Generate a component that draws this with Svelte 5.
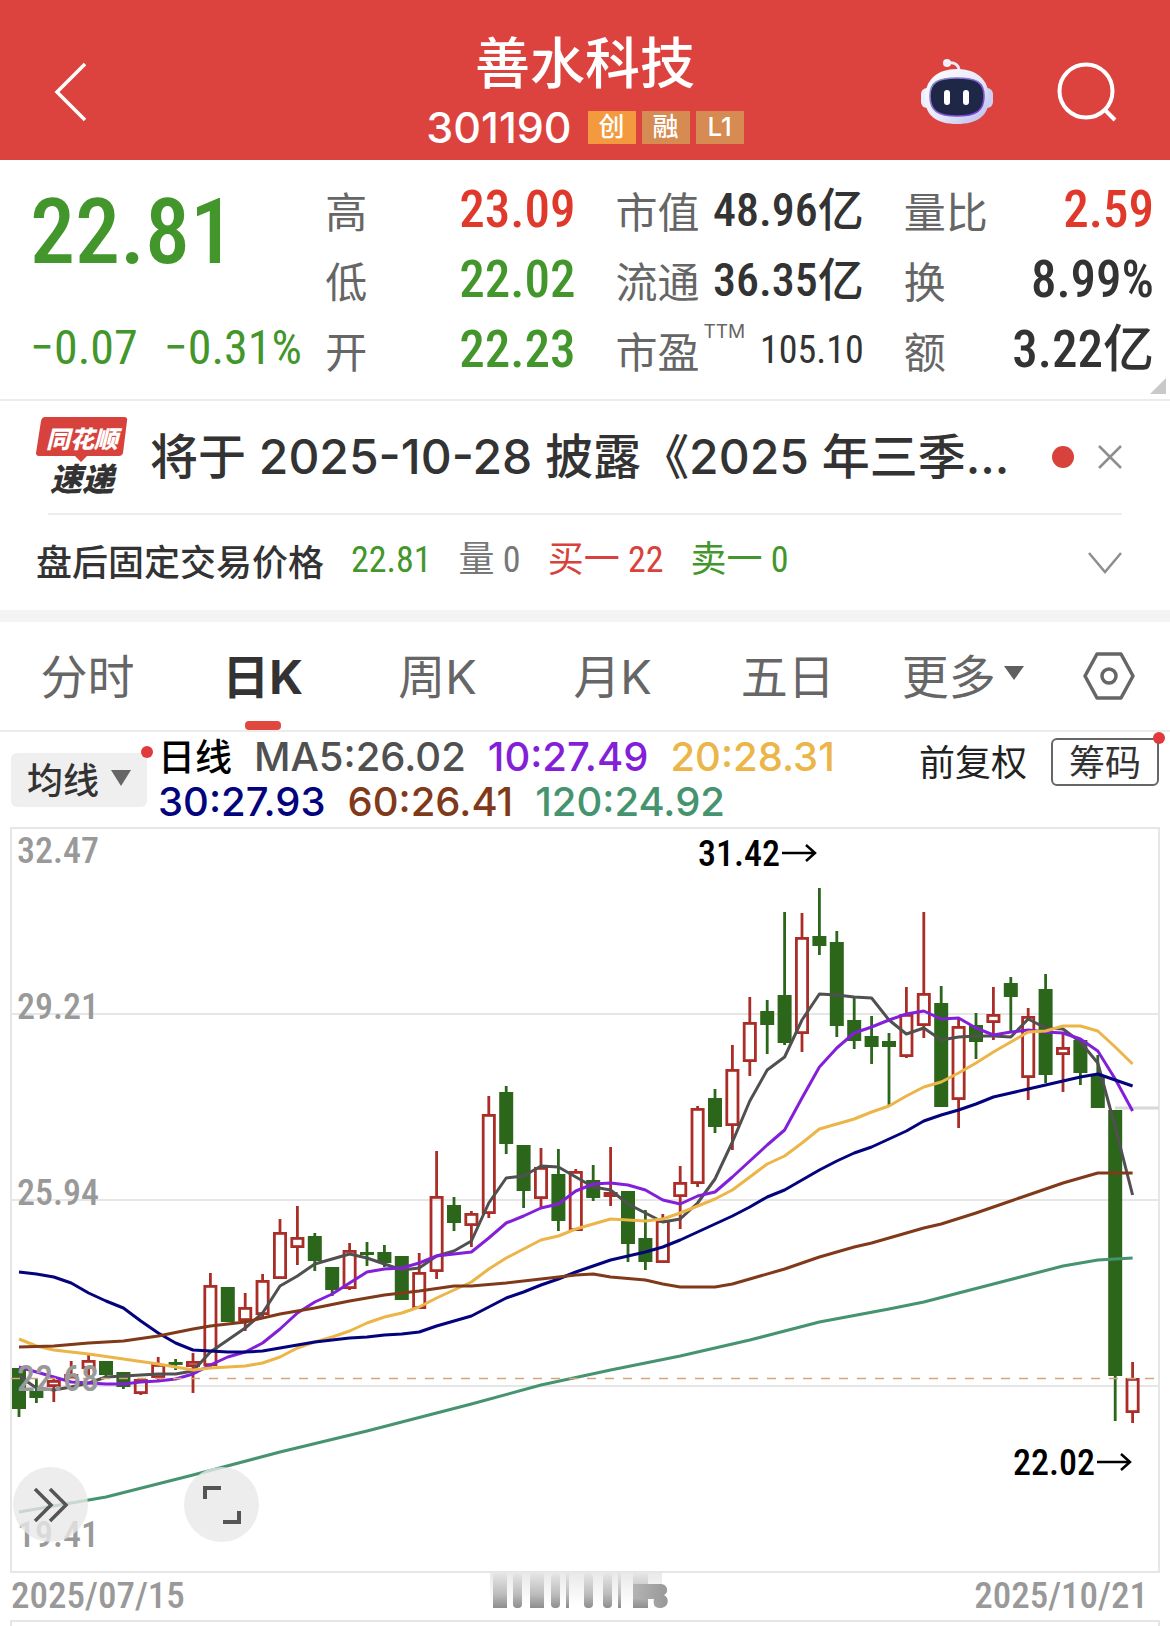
<script>
  // Candle rows: [high, body top, body bottom, low, rising]
  const candles = [
    [1368,1368,1409,1417,0],[1378,1391,1398,1403,0],[1376,1380,1387,1402,1],[1361,1374,1379,1379,1],
    [1354,1360,1369,1378,1],[1361,1361,1375,1378,0],[1372,1372,1387,1389,0],[1379,1379,1394,1395,1],
    [1357,1364,1378,1382,1],[1359,1362,1365,1370,0],[1353,1361,1367,1393,1],[1273,1285,1366,1367,1],
    [1287,1287,1322,1322,0],[1293,1307,1321,1331,1],[1274,1280,1315,1317,1],[1219,1232,1279,1279,1],
    [1206,1237,1248,1265,1],[1233,1236,1261,1271,0],[1267,1267,1290,1296,0],[1243,1250,1289,1290,1],
    [1242,1252,1255,1266,0],[1245,1252,1263,1267,0],[1256,1256,1300,1300,0],[1253,1272,1309,1309,1],
    [1151,1196,1272,1279,1],[1197,1205,1223,1231,0],[1211,1213,1226,1247,1],[1096,1114,1214,1218,1],
    [1086,1092,1144,1154,0],[1145,1145,1191,1208,0],[1148,1167,1199,1208,1],[1149,1174,1221,1231,0],
    [1169,1171,1231,1231,1],[1165,1180,1198,1201,0],[1147,1192,1197,1206,1],[1191,1191,1244,1262,0],
    [1210,1238,1262,1270,0],[1214,1220,1263,1263,1],[1166,1182,1197,1229,1],[1106,1108,1184,1187,1],
    [1089,1098,1127,1133,0],[1045,1069,1126,1150,1],[997,1022,1062,1076,1],[1000,1011,1025,1054,0],
    [912,995,1043,1045,0],[913,937,1034,1052,1],[888,936,946,955,0],[931,942,1026,1037,0],
    [997,1020,1041,1049,0],[1016,1036,1047,1064,0],[1033,1041,1047,1105,0],[987,1014,1057,1058,1],
    [912,993,1026,1038,1],[986,1003,1107,1107,0],[1018,1026,1100,1128,1],[1013,1025,1042,1059,0],
    [987,1014,1023,1040,1],[977,983,997,1033,0],[1008,1016,1078,1100,1],[974,989,1075,1083,0],
    [1033,1047,1055,1092,1],[1038,1040,1073,1085,0],[1055,1075,1108,1108,0],[1110,1110,1376,1421,0],
    [1362,1378,1413,1423,1]
  ];
  const cx = (i) => 19 + 17.4 * i;

  const dense = (ys) => ys.map((y, i) => `${cx(i).toFixed(1)},${y}`).join(' ');
  const sparse = (ps) => ps.map(([i, y]) => `${cx(i).toFixed(1)},${y}`).join(' ');

  const averages = [
    { color: '#45936f', points: sparse([[0,1512],[5,1497],[10,1475],[15,1452],[20,1431],[24,1413],[26,1404],[30,1385],[34,1370],[38,1356],[42,1340],[46,1322],[50,1309],[52,1302],[54,1293],[56,1284],[58,1275],[60,1266],[62,1260],[64,1258]]) },
    { color: '#505050', points: dense([1376,1388,1390,1387,1383,1377,1376,1375,1374,1374,1371,1352,1340,1328,1313,1286,1276,1264,1259,1254,1258,1264,1270,1268,1256,1251,1241,1203,1178,1176,1166,1167,1177,1187,1190,1204,1213,1222,1219,1203,1179,1142,1101,1070,1057,1020,994,995,997,998,1020,1034,1028,1040,1037,1036,1036,1037,1019,1028,1029,1042,1063,1127,1195]) },
    { color: '#841fd9', points: dense([1367,1372,1377,1382,1383,1384,1384,1382,1381,1379,1374,1365,1357,1352,1343,1329,1313,1302,1294,1283,1272,1269,1268,1263,1256,1254,1252,1238,1223,1216,1208,1204,1191,1184,1183,1185,1190,1200,1204,1196,1192,1177,1161,1145,1130,1098,1067,1048,1033,1027,1020,1014,1011,1019,1018,1028,1035,1032,1030,1032,1033,1039,1051,1079,1111]) },
    { color: '#ebb548', points: sparse([[0,1339],[1,1346],[2,1350],[4,1354],[6,1359],[8,1364],[9,1367],[10,1370],[11,1368],[13,1366],[14,1363],[15,1357],[16,1348],[17,1342],[18,1337],[19,1331],[20,1323],[21,1317],[22,1313],[23,1307],[24,1298],[25,1290],[26,1282],[27,1269],[28,1258],[29,1249],[30,1240],[31,1236],[32,1229],[33,1224],[34,1219],[35,1220],[36,1221],[37,1219],[38,1213],[39,1206],[40,1199],[41,1190],[42,1177],[43,1164],[44,1156],[45,1143],[46,1129],[47,1124],[48,1119],[49,1112],[50,1106],[51,1096],[52,1087],[53,1082],[54,1073],[55,1063],[56,1052],[57,1042],[58,1032],[59,1031],[60,1026],[61,1026],[62,1031],[63,1047],[64,1064]]) },
    { color: '#03037e', points: dense([1272,1274,1277,1283,1293,1301,1308,1321,1333,1343,1350,1351,1352,1352,1351,1348,1345,1342,1340,1338,1337,1335,1334,1332,1326,1321,1316,1307,1298,1292,1285,1279,1272,1266,1260,1256,1252,1247,1240,1232,1224,1216,1207,1197,1190,1180,1170,1161,1153,1147,1139,1131,1121,1115,1110,1104,1097,1093,1089,1085,1081,1077,1074,1080,1086]) },
    { color: '#803a1a', points: sparse([[0,1347],[2,1346],[4,1343],[6,1341],[8,1336],[10,1329],[11,1326],[13,1322],[15,1314],[17,1308],[19,1301],[21,1295],[23,1291],[25,1286],[26,1286],[28,1283],[30,1279],[32,1275],[33,1274],[34,1277],[36,1280],[37,1284],[38,1287],[40,1287],[41,1284],[42,1279],[44,1269],[46,1257],[48,1247],[49,1243],[50,1238],[52,1228],[53,1224],[55,1213],[57,1201],[58,1195],[60,1183],[61,1178],[62,1173],[64,1173]]) }
  ];

  const axis = [['32.47', 863], ['29.21', 1019], ['25.94', 1205], ['22.68', 1391], ['19.41', 1547]];

  const columns = [
    [['高', '23.09', 'up'], ['低', '22.02', 'down'], ['开', '22.23', 'down']],
    [['市值', '48.96亿', 'mid'], ['流通', '36.35亿', 'mid'], ['市盈', '105.10', 'small', 'TTM']],
    [['量比', '2.59', 'up'], ['换', '8.99%', ''], ['额', '3.22亿', '']]
  ];

  const tabs = ['分时', '日K', '周K', '月K', '五日'];

  const legend = [
    ['MA5:26.02', 'ma5'], ['10:27.49', 'ma10'], ['20:28.31', 'ma20'],
    ['30:27.93', 'ma30'], ['60:26.41', 'ma60'], ['120:24.92', 'ma120']
  ];

  // Smeared middle date: [x, width]
  const smear = [[5,14],[25,9],[42,14],[63,9],[78,3],[96,9],[115,9],[130,3],[145,15]];
</script>

<div class="page">
  <header>
    <button class="plain back" aria-label="返回">
      <svg width="36" height="60" viewBox="0 0 36 60"><path d="M33 2 L5 30 L33 58" fill="none" stroke="#fff" stroke-width="3.5" /></svg>
    </button>
    <div class="heading">
      <h1>善水科技</h1>
      <div class="code">
        <span class="num">301190</span>
        <span class="tag bright">创</span><span class="tag">融</span><span class="tag">L1</span>
      </div>
    </div>
    <div class="actions">
      <button class="plain" aria-label="助手">
        <svg width="74" height="68" viewBox="0 0 74 68">
          <defs>
            <linearGradient id="shell" x1="0" y1="0" x2="1" y2="1"><stop offset="0" stop-color="#fff" /><stop offset=".55" stop-color="#e6e8fa" /><stop offset="1" stop-color="#b6b9ea" /></linearGradient>
            <linearGradient id="rim" x1="0" y1="0" x2="1" y2="1"><stop offset="0" stop-color="#8d91c9" /><stop offset="1" stop-color="#7b35dd" /></linearGradient>
          </defs>
          <path d="M39 13 C39 7 35 4 28 5" fill="none" stroke="#eceaf6" stroke-width="3" />
          <circle cx="27" cy="5" r="4" fill="#f3eef8" />
          <rect x="1" y="30" width="12" height="20" rx="6" fill="#eceefd" />
          <rect x="61" y="30" width="12" height="20" rx="6" fill="#cdcff5" />
          <path d="M37 11 C57 11 69 22 69 40 C69 58 57 66 37 66 C17 66 5 58 5 40 C5 22 17 11 37 11 Z" fill="url(#shell)" />
          <path d="M37 20 C56 20 64 24 64 38 C64 53 56 58 37 58 C18 58 10 53 10 38 C10 24 18 20 37 20 Z" fill="#1e2746" stroke="url(#rim)" stroke-width="1.6" />
          <rect x="24" y="32" width="6" height="15" rx="3" fill="#fff" />
          <rect x="43" y="32" width="6" height="15" rx="3" fill="#fff" />
        </svg>
      </button>
      <button class="plain" aria-label="搜索">
        <svg width="62" height="62" viewBox="0 0 62 62"><g fill="none" stroke="#fff" stroke-width="4"><circle cx="30" cy="30" r="26.500" /><path d="M48 48 L59 59" /></g></svg>
      </button>
    </div>
  </header>

  <section class="quote">
    <div class="last">
      <div class="price">22.81</div>
      <div class="change"><span>−0.07</span><span>−0.31%</span></div>
    </div>
    {#each columns as col}
      <dl>
        {#each col as [label, value, tone, sup]}
          <div class="pair"><dt>{label}{#if sup}<sup>{sup}</sup>{/if}</dt><dd class={tone}>{value}</dd></div>
        {/each}
      </dl>
    {/each}
    <svg class="corner" width="16" height="16" viewBox="0 0 16 16"><path d="M16 0 V16 H0 Z" fill="#c9c9c9" /></svg>
  </section>

  <section class="news">
    <div class="logo">
      <svg class="bubble" width="92" height="46" viewBox="0 0 92 46"><path d="M9 0 H88 Q92 0 91 4 L87 36 Q86 39 83 39 H51 L45 45 L39 39 H3 Q0 39 0 36 L5 4 Q6 0 9 0 Z" fill="#d8423c" /></svg>
      <span class="brand">同花顺</span>
      <span class="express">速递</span>
    </div>
    <a href="#notice">将于 2025-10-28 披露《2025 年三季...</a>
    <i class="dot"></i>
    <button class="plain" aria-label="关闭">
      <svg width="24" height="24" viewBox="0 0 24 24"><path d="M1 1 L23 23 M23 1 L1 23" stroke="#8e8e8e" stroke-width="2.5" /></svg>
    </button>
  </section>

  <section class="after">
    <span class="label">盘后固定交易价格</span>
    <span class="down">22.81</span>
    <span class="muted">量 0</span>
    <span class="buy">买一 22</span>
    <span class="down">卖一 0</span>
    <button class="plain more" aria-label="展开">
      <svg width="34" height="24" viewBox="0 0 34 24"><path d="M1 2 L17 21 L33 2" fill="none" stroke="#8e8e8e" stroke-width="2.5" /></svg>
    </button>
  </section>

  <nav>
    {#each tabs as tab, i}
      <button class="plain tab" class:active={i === 1}>{tab}</button>
    {/each}
    <button class="plain tab">更多<svg width="20" height="14" viewBox="0 0 20 14"><path d="M0 0 H20 L10 14 Z" fill="#5f5f5f" /></svg></button>
    <button class="plain gear" aria-label="设置">
      <svg width="52" height="48" viewBox="0 0 52 48"><g fill="none" stroke="#666" stroke-width="3.5"><path d="M14 2 H38 L50 24 L38 46 H14 L2 24 Z" stroke-linejoin="round" /><circle cx="26" cy="24" r="7" /></g></svg>
    </button>
  </nav>

  <section class="indicators">
    <button class="plain average">均线<svg width="20" height="16" viewBox="0 0 20 16"><path d="M0 0 H20 L10 16 Z" fill="#666" /></svg><i class="badge"></i></button>
    <div class="legend">
      <strong>日线</strong>
      {#each legend as [text, cls]}<span class={cls}>{text}</span>{/each}
    </div>
    <button class="plain adjust">前复权</button>
    <button class="plain chips">筹码<i class="badge"></i></button>
  </section>

  <section class="chart">
    <svg class="plot" viewBox="10 827 1150 746">
      <g stroke="#e6e6e6" stroke-width="2" fill="none">
        <rect x="11" y="828" width="1148" height="744" />
        <path d="M11 1014 H1159 M11 1200 H1159 M11 1386 H1159" />
      </g>
      <path d="M1115 1108 H1159" stroke="#d8d8d8" stroke-width="3" />
      {#each candles as [high, top, bottom, low, rising], i}
        {#if rising}
          <g stroke="#aa2e27" fill="none">
            <path d="M{cx(i)} {high} V{top} M{cx(i)} {bottom} V{low}" stroke-width="2.8" />
            <rect x={cx(i) - 5.6} y={top + 1.4} width="11.200" height={Math.max(bottom - top - 2.8, 2)} stroke-width="2.8" />
          </g>
        {:else}
          <g fill="#2b661a">
            <rect x={cx(i) - 1.4} y={high} width="2.8" height={low - high} />
            <rect x={cx(i) - 7} y={top} width="14" height={bottom - top} />
          </g>
        {/if}
      {/each}
      {#each averages as line}
        <polyline points={line.points} fill="none" stroke={line.color} stroke-width="3" stroke-linejoin="round" />
      {/each}
      <path d="M11 1378.500 H1159" stroke="#d3a67c" stroke-width="1.5" stroke-dasharray="9 9" />
      {#each axis as [label, y]}<text class="axis" x="17" {y}>{label}</text>{/each}
      <text class="mark" x="780" y="866" text-anchor="end">31.42</text>
      <text class="mark" x="1095" y="1475" text-anchor="end">22.02</text>
      <g fill="none" stroke="#000" stroke-width="2.5">
        <path d="M782 853 H815 M806 845 L815 853 L806 861" />
        <path d="M1097 1462 H1130 M1121 1454 L1130 1462 L1121 1470" />
      </g>
    </svg>
    <div class="tools">
      <button class="plain round" aria-label="快进">
        <svg width="36" height="36" viewBox="0 0 36 36"><path d="M2 2 L18 18 L2 34 M17 2 L33 18 L17 34" fill="none" stroke="#555" stroke-width="3.5" /></svg>
      </button>
      <button class="plain round" aria-label="全屏">
        <svg width="40" height="40" viewBox="0 0 40 40"><path d="M3 14 V3 H19 M37 26 V37 H21" fill="none" stroke="#555" stroke-width="4" /></svg>
      </button>
    </div>
  </section>

  <div class="dates">
    <span>2025/07/15</span>
    <svg width="184" height="46" viewBox="0 0 184 46" aria-hidden="true">
      <defs>
        <linearGradient id="smear" x1="0" y1="0" x2="0" y2="1"><stop offset="0" stop-color="#e6e6e6" /><stop offset=".6" stop-color="#bdbdbd" /><stop offset="1" stop-color="#8d8d8d" /></linearGradient>
        <linearGradient id="haze" x1="0" y1="0" x2="0" y2="1"><stop offset="0" stop-color="#e9e9e9" /><stop offset="1" stop-color="#fff" /></linearGradient>
        <linearGradient id="tail" x1="0" y1="0" x2="1" y2="0"><stop offset="0" stop-color="#b4b4b4" /><stop offset="1" stop-color="#989898" /></linearGradient>
      </defs>
      <rect x="2" y="0" width="172" height="32" fill="url(#haze)" />
      {#each smear as [x, w]}<rect {x} y="0" width={w} height="35" rx={w === 9 ? 4 : 0} fill="url(#smear)" />{/each}
      <path d="M145 11 H173 C180 11 181 20 176 22 C182 25 181 35 172 35 C166 35 165 31 166 26 H145 Z" fill="url(#tail)" />
    </svg>
    <span>2025/10/21</span>
  </div>
  <div class="next"></div>
</div>

<style>
  :global(body) { background: #fff; }
  :global(#app) { --cjk: "Noto Sans CJK SC", sans-serif; --ui: Inter, "Noto Sans CJK SC", sans-serif; --din: "Roboto Condensed", "Liberation Sans Narrow", Roboto, "Noto Sans CJK SC", sans-serif; }
  .page { font-family: var(--ui); color: #333; }
  .plain { border: 0; background: none; padding: 0; margin: 0; font: inherit; color: inherit; display: flex; align-items: center; }
  svg { display: block; flex: none; }
  h1, dl, dd { margin: 0; }

  header { background: #dc433f; color: #fff; display: grid; grid-template-columns: 1fr auto 1fr; height: 160px; padding: 0 52px; }
  .back { padding-top: 24px; padding-bottom: 4px; }
  .heading { display: flex; flex-direction: column; align-items: center; padding-top: 27px; }
  h1 { font: 500 55px/64px var(--cjk); }
  .code { display: flex; align-items: center; gap: 6px; height: 72px; }
  .num { font-size: 43px; font-weight: 500; margin-right: 10px; }
  .tag { width: 48px; height: 33px; background: #d58b52; font: 500 26px/32px var(--ui); text-align: center; }
  .tag.bright { background: #f39a3e; }
  .actions { display: flex; justify-content: flex-end; align-items: center; gap: 62px; padding-top: 24px; padding-bottom: 4px; }

  .quote { position: relative; display: grid; grid-template-columns: minmax(0, 255fr) minmax(0, 250fr) minmax(0, 248fr) minmax(0, 250fr); column-gap: 40px; padding: 15px 16px 14px 30px; border-bottom: 2px solid #ececec; font-family: var(--din); }
  .last { color: #43962b; white-space: nowrap; font-weight: 500; }
  .price { font-size: 90px; line-height: 116px; height: 140px; }
  .change { display: flex; gap: 26px; font-size: 48px; line-height: 66px; font-weight: 400; }
  .pair { display: flex; justify-content: space-between; align-items: center; height: 70px; white-space: nowrap; }
  dt { font: 400 42px/60px var(--cjk); color: #666; display: flex; }
  sup { font: 400 19px/20px var(--ui); margin: 2px 0 0 4px; }
  dd { font-size: 51px; font-weight: 500; line-height: 66px; height: 66px; color: #333; }
  dd.mid { font-size: 46px; }
  dd.small { font-size: 38px; font-weight: 400; }
  .up { color: #e0382b; }
  .down { color: #43962b; }
  .corner { position: absolute; right: 4px; bottom: 5px; }

  .news { display: flex; align-items: center; height: 112px; margin: 0 48px; border-bottom: 2px solid #ececec; }
  .logo { position: relative; width: 92px; height: 80px; margin-left: -12px; display: flex; flex-direction: column; align-items: center; font-family: var(--cjk); font-style: italic; font-weight: 900; white-space: nowrap; }
  .bubble { position: absolute; top: 0; left: 0; }
  .brand { position: relative; color: #fff; font-size: 24px; line-height: 42px; }
  .express { font-size: 32px; line-height: 36px; }
  .news a { flex: 1; margin-left: 22px; padding-bottom: 8px; font-size: 48px; font-weight: 500; color: #333; text-decoration: none; white-space: nowrap; }
  .dot { width: 22px; height: 22px; border-radius: 50%; background: #d8423c; margin-right: 24px; }

  .after { display: flex; align-items: center; height: 95px; padding: 0 48px 0 36px; gap: 27px; font: 400 36px/48px var(--din); border-bottom: 12px solid #f4f4f4; white-space: nowrap; }
  .after span { padding-bottom: 5px; }
  .label { font: 500 36px/48px var(--cjk); color: #333; }
  .muted { color: #777; }
  .buy { color: #d8423c; }
  .more { margin-left: auto; }

  nav { display: grid; grid-template-columns: repeat(6, 3fr) 2fr; height: 108px; padding-right: 3px; border-bottom: 2px solid #ececec; }
  .tab { position: relative; justify-content: center; gap: 8px; padding-bottom: 6px; color: #666; font: 400 47px var(--ui); }
  .gear { justify-content: center; }
  .tab.active { color: #333; font-weight: 700; }
  .active::after { content: ""; position: absolute; bottom: 0; left: 50%; margin-left: -18px; width: 36px; height: 9px; border-radius: 4px; background: #e0483f; }

  .indicators { display: flex; align-items: flex-start; height: 95px; padding: 0 11px; }
  .average { position: relative; box-sizing: border-box; margin-top: 21px; padding-bottom: 4px; height: 54px; width: 136px; justify-content: center; gap: 12px; background: #efefef; border-radius: 6px; font: 500 36px/48px var(--cjk); color: #333; }
  .badge { position: absolute; top: -7px; right: -6px; width: 12px; height: 12px; border-radius: 50%; background: #e03a3e; }
  .legend { flex: 1; display: flex; flex-wrap: wrap; column-gap: 22px; padding: 2px 0 0 11px; margin-right: 40px; font-size: 40px; font-weight: 500; line-height: 45px; }
  .legend strong { font: 500 37px/42px var(--cjk); color: #000; }
  .ma5 { color: #505050; } .ma10 { color: #841fd9; } .ma20 { color: #ebb548; }
  .ma30 { color: #03037e; } .ma60 { color: #803a1a; } .ma120 { color: #45936f; }
  .adjust { font: 400 36px/44px var(--cjk); color: #222; margin: 6px 24px 0 0; }
  .chips { position: relative; box-sizing: border-box; justify-content: center; width: 108px; height: 48px; margin-top: 6px; padding-bottom: 4px; border: 2px solid #666; border-radius: 6px; font: 400 36px/40px var(--cjk); color: #333; }
  .chips .badge { top: -8px; right: -8px; }

  .chart { position: relative; padding: 0 10px; }
  .plot { width: 100%; height: auto; }
  .axis { font: 500 36px var(--din); fill: #999; }
  .mark { font: 500 36px var(--din); fill: #000; }
  .tools { position: absolute; left: 13px; bottom: 31px; display: flex; gap: 96px; }
  .round { width: 75px; height: 75px; border-radius: 50%; justify-content: center; background: rgba(232, 232, 232, 0.8); }

  .dates { display: flex; justify-content: space-between; height: 47px; padding: 0 22px 0 11px; font: 500 37px/46px var(--din); color: #999; }
  .next { height: 6px; box-sizing: border-box; margin: 0 10px; border: solid #e6e6e6; border-width: 2px 2px 0; }
</style>
